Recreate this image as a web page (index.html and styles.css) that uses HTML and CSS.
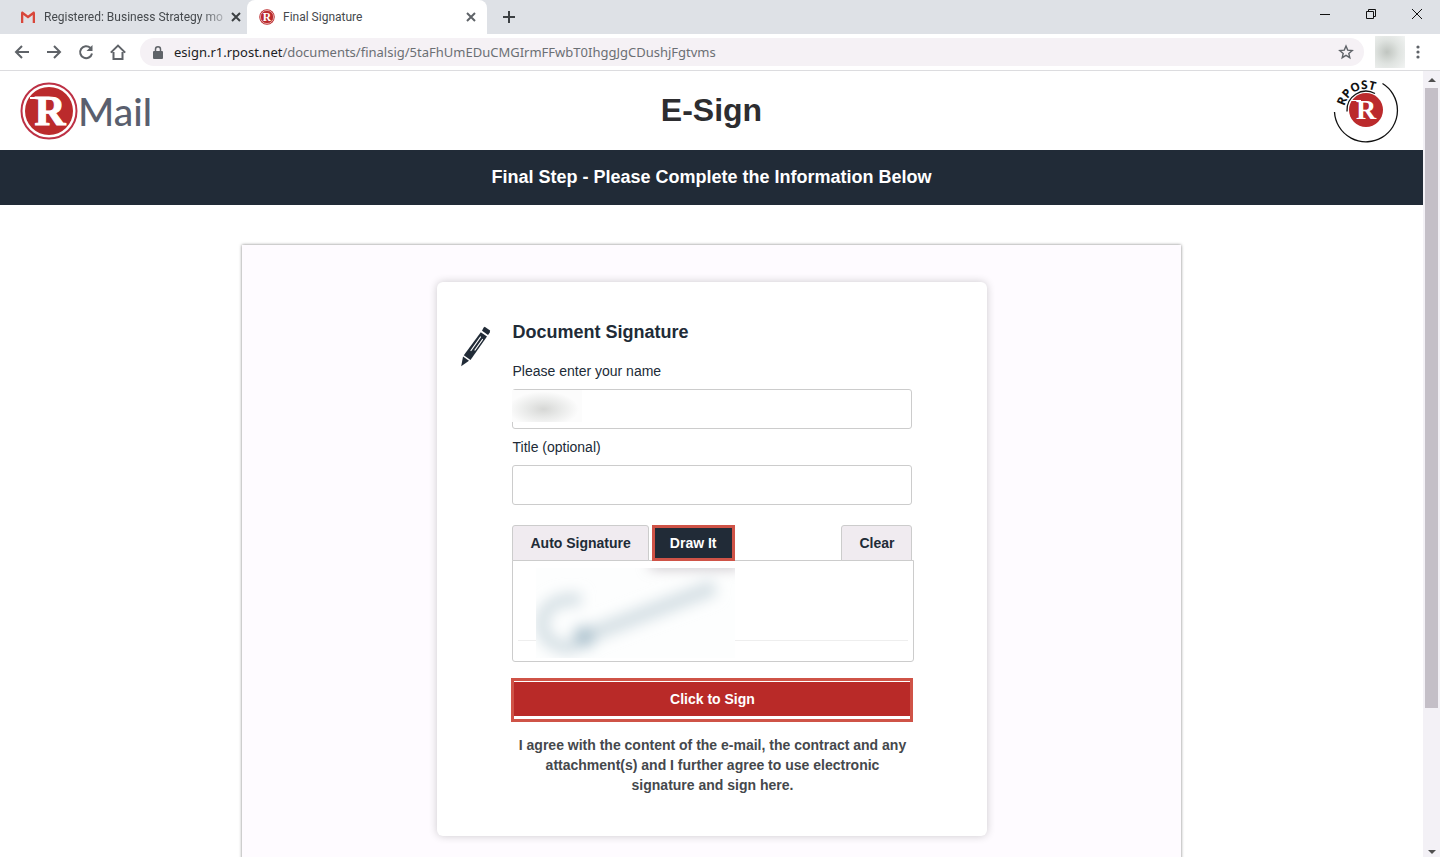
FILE: index.html
```html
<!DOCTYPE html>
<html lang="en">
<head>
    <meta charset="UTF-8">
    <meta name="viewport" content="width=device-width, initial-scale=1">
    <title>Final Signature</title>
    <link rel="stylesheet" href="styles.css">
</head>
<body>
    <!-- Browser tabs -->
    <div class="tab-strip">
        <div class="tab">
            <svg class="favicon" viewBox="0 0 16 16">
                <path d="M1 3v11h2.500V6.500L8 10l4.500-3.500V14H15V3" fill="#e9e4e4"/>
                <path d="M1 14V4.200C1 2.600 2.300 2.200 3.300 3L8 6.600 12.700 3c1-.8 2.300-.4 2.300 1.200V14h-2.300V6L8 9.600 3.300 6v8z" fill="#d8473b"/>
            </svg>
            <span class="tab-title fade">Registered: Business Strategy mo</span>
            <button class="icon-btn" aria-label="Close tab"><svg width="10" height="10" viewBox="0 0 10 10"><path d="M1 1l8 8M9 1L1 9" stroke="#3c4043" stroke-width="2"/></svg></button>
        </div>
        <div class="tab active">
            <svg class="favicon" viewBox="0 0 58 58">
                <circle cx="29" cy="29" r="28" fill="#bb2a2c"/>
                <circle cx="29" cy="29" r="24" fill="none" stroke="#fff" stroke-width="2"/>
                <text class="logo-r" x="29" y="43" font-size="42">R</text>
            </svg>
            <span class="tab-title">Final Signature</span>
            <button class="icon-btn" aria-label="Close tab"><svg width="10" height="10" viewBox="0 0 10 10"><path d="M1 1l8 8M9 1L1 9" stroke="#5f6368" stroke-width="2"/></svg></button>
        </div>
        <button class="icon-btn new-tab" aria-label="New tab"><svg width="12" height="12" viewBox="0 0 12 12"><path d="M6 0v12M0 6h12" stroke="#3c4043" stroke-width="2"/></svg></button>
        <div class="window-buttons">
            <button class="icon-btn" aria-label="Minimize"><svg width="12" height="12" viewBox="0 0 12 12"><path d="M1 6.500h10" stroke="#111"/></svg></button>
            <button class="icon-btn" aria-label="Restore"><svg width="12" height="12" viewBox="0 0 12 12" fill="none" stroke="#111"><path d="M1.500 3.500h7v7h-7zM3.500 3.500v-2h7v7h-2"/></svg></button>
            <button class="icon-btn" aria-label="Close"><svg width="12" height="12" viewBox="0 0 12 12"><path d="M1 1l10 10M11 1L1 11" stroke="#111"/></svg></button>
        </div>
    </div>

    <!-- Toolbar -->
    <div class="toolbar">
        <button class="icon-btn" aria-label="Back"><svg width="16" height="16" viewBox="0 0 16 16" class="stroke"><path d="M15 8H2M8 2L2 8l6 6"/></svg></button>
        <button class="icon-btn" aria-label="Forward"><svg width="16" height="16" viewBox="0 0 16 16" class="stroke"><path d="M1 8h13M8 2l6 6-6 6"/></svg></button>
        <button class="icon-btn" aria-label="Reload"><svg width="16" height="16" viewBox="0 0 16 16" class="stroke"><path d="M14 9.500A6 6 0 1 1 12.300 3.800L13.500 5"/><path d="M14.500 1v6h-6z" fill="#5f6368" stroke="none"/></svg></button>
        <button class="icon-btn" aria-label="Home"><svg width="16" height="16" viewBox="0 0 16 16" class="stroke"><path d="M3.500 8v7h9V8M.8 8.600L8 1.600l7.200 7"/></svg></button>
        <div class="address-bar">
            <svg width="10" height="13" viewBox="0 0 10 13"><rect x="0" y="5" width="10" height="8" rx="1" fill="#5f6368"/><path d="M2.500 5.500V3.300a2.500 2.500 0 0 1 5 0v2.200" fill="none" stroke="#5f6368" stroke-width="1.500"/></svg>
            <span class="url"><b>esign.r1.rpost.net</b>/documents/finalsig/5taFhUmEDuCMGIrmFFwbT0IhggJgCDushjFgtvms</span>
            <button class="icon-btn" aria-label="Bookmark"><svg width="16" height="16" viewBox="0 0 16 16"><path d="M8 2l1.700 4.100 4.500.4-3.400 2.900 1 4.300L8 11.400l-3.800 2.300 1-4.300L1.800 6.500l4.500-.4z" fill="none" stroke="#5f6368" stroke-width="1.400"/></svg></button>
        </div>
        <div class="avatar"></div>
        <button class="icon-btn" aria-label="Menu"><svg width="4" height="14" viewBox="0 0 4 14" fill="#5f6368"><circle cx="2" cy="2" r="1.600"/><circle cx="2" cy="7" r="1.600"/><circle cx="2" cy="12" r="1.600"/></svg></button>
    </div>

    <div class="viewport">
        <div class="page">
            <header class="header">
                <div class="brand">
                    <svg width="58" height="58" viewBox="0 0 58 58">
                        <circle cx="29" cy="29" r="27.500" fill="#fff" stroke="#bd3145" stroke-width="2"/>
                        <circle cx="29" cy="29" r="24" fill="#bb2a2c"/>
                        <text class="logo-r" x="30" y="43" font-size="43" stroke="#fff">R</text>
                        <path d="M10 15h10v2H10z" fill="#fff"/>
                    </svg>
                    <span>Mail</span>
                </div>
                <h1>E-Sign</h1>
                <svg class="rpost" width="66" height="66" viewBox="0 0 66 66">
                    <defs><path id="arc" d="M11.500 28.400A22 22 0 0 1 49 18"/></defs>
                    <path d="M49.500 5.500A31.500 31.500 0 1 1 1.500 34" fill="none" stroke="#111" stroke-width="1.300"/>
                    <path d="M14 33.500A19 19 0 0 1 42 15.500" fill="none" stroke="#111" stroke-width="1.300"/>
                    <circle cx="33" cy="32" r="17" fill="#bb2a2c"/>
                    <text class="logo-r" x="33" y="41" font-size="28">R</text>
                    <path d="M18 22h10v1H18z" fill="#fff"/>
                    <text class="rpost-text"><textPath href="#arc">RPOST</textPath></text>
                </svg>
            </header>
            <div class="banner">Final Step - Please Complete the Information Below</div>

            <main class="panel">
                <form class="card">
                    <svg class="pencil" width="32" height="42" viewBox="0 0 32 42">
                        <g fill="#212b37">
                            <path d="M23.500 1.800l1.200-1 5.400 3.800-.3 1.800-1.800 2.600-6-4.200z"/>
                            <path d="M20.800 6.200l6.200 4.400-16.500 23.400-6.700-4.700z"/>
                            <path d="M3 30.500l6 4.300-7.800 5.400z"/>
                        </g>
                        <path d="M20.500 11L11 24.500M22.500 13.500L15 24" stroke="#fff" stroke-width="1.200" stroke-linecap="round"/>
                    </svg>
                    <div class="fields">
                        <h2>Document Signature</h2>
                        <label for="name">Please enter your name</label>
                        <div class="name-field">
                            <input type="text" id="name">
                            <span class="redacted"></span>
                        </div>
                        <label for="job-title">Title (optional)</label>
                        <input type="text" id="job-title">
                        <div class="sig-tabs">
                            <button type="button">Auto Signature</button>
                            <button type="button" class="current">Draw It</button>
                            <button type="button" class="clear">Clear</button>
                        </div>
                        <div class="sig-pad">
                            <svg width="100%" height="100" viewBox="0 0 400 100">
                                <defs>
                                    <filter id="soft" x="-30%" y="-30%" width="160%" height="160%"><feGaussianBlur stdDeviation="7"/></filter>
                                    <clipPath id="area"><rect x="23" y="7" width="199" height="90"/></clipPath>
                                </defs>
                                <path d="M5 79.500h390" stroke="#eee"/>
                                <g clip-path="url(#area)">
                                    <rect x="22" y="7" width="200" height="90" fill="#fdfefe"/>
                                    <g filter="url(#soft)" fill="none">
                                        <path d="M137 2h90" stroke="#b8b0b8" stroke-width="9"/>
                                        <path d="M68 39C44 35 28 48 29 64s18 25 34 22" stroke="#d4dfe4" stroke-width="13"/>
                                        <path d="M70 76L202 26" stroke="#d6e0e5" stroke-width="16"/>
                                        <circle cx="71" cy="76" r="11" fill="#b0c5d0"/>
                                    </g>
                                </g>
                            </svg>
                        </div>
                        <div class="sign-outline"><button type="submit" class="sign-btn">Click to Sign</button></div>
                        <p>I agree with the content of the e-mail, the contract and any attachment(s) and I further agree to use electronic signature and sign here.</p>
                    </div>
                </form>
            </main>
        </div>
        <div class="scrollbar">
            <svg width="8" height="4" viewBox="0 0 8 4"><path d="M0 4l4-4 4 4z" fill="#505050"/></svg>
            <div class="track"><div class="thumb"></div></div>
            <svg width="8" height="4" viewBox="0 0 8 4"><path d="M0 0l4 4 4-4z" fill="#505050"/></svg>
        </div>
    </div>
</body>
</html>
```
FILE: styles.css
```css
* {
    box-sizing: border-box;
}

body {
    margin: 0;
    height: 100vh;
    display: flex;
    flex-direction: column;
    overflow: hidden;
    background: #fff;
    color: #212b37;
    font-family: "Liberation Sans", Arial, sans-serif;
    font-size: 14px;
}

svg {
    display: block;
    flex: none;
}

button {
    font-family: inherit;
    cursor: pointer;
}

.icon-btn {
    display: flex;
    flex: none;
    align-items: center;
    justify-content: center;
    padding: 0;
    border: none;
    background: none;
}

/* browser */
.tab-strip {
    display: flex;
    flex: none;
    height: 34px;
    background: #dee1e6;
    font-family: Roboto, "Open Sans", sans-serif;
    font-size: 12px;
    color: #45494d;
}

.tab {
    display: flex;
    align-items: center;
    gap: 8px;
    width: 240px;
    padding: 0 11px 0 12px;
}

.tab:first-child {
    width: 247px;
    padding: 0 10px 0 20px;
}

.tab.active {
    background: #fff;
    border-radius: 8px 8px 0 0;
}

.favicon {
    width: 16px;
    height: 16px;
}

.tab-title {
    flex: 1;
    white-space: nowrap;
}

.fade {
    mask-image: linear-gradient(to right, #000 88%, rgba(0, 0, 0, 0.3));
}

.new-tab {
    margin-left: 16px;
}

.window-buttons {
    display: flex;
    gap: 34px;
    margin: 0 17px 6px auto;
}

.toolbar {
    display: flex;
    flex: none;
    align-items: center;
    gap: 16px;
    height: 37px;
    padding: 0 20px 0 14px;
    border-bottom: 1px solid #dcdcdf;
}

.stroke {
    fill: none;
    stroke: #5f6368;
    stroke-width: 2;
}

.address-bar {
    display: flex;
    flex: 1;
    align-items: center;
    gap: 11px;
    height: 28px;
    margin-right: -5px;
    margin-left: -2px;
    padding: 0 10px 0 13px;
    border-radius: 14px;
    background: #f5f1f5;
}

.url {
    flex: 1;
    font-family: "Noto Sans", "Open Sans", sans-serif;
    font-size: 13px;
    color: #6b6f74;
}

.url b {
    font-weight: normal;
    color: #202124;
}

.avatar {
    width: 30px;
    height: 32px;
    margin-right: -5px;
    background: radial-gradient(circle at 40% 50%, #c0c5c0, #dfe3e0 50%, #f2f4f3);
}

/* page */
.viewport {
    display: flex;
    flex: 1;
    min-height: 0;
}

.page {
    flex: 1;
    overflow: hidden;
}

.header {
    display: grid;
    grid-template-columns: 1fr auto 1fr;
    align-items: center;
    height: 79px;
    padding: 0 20px;
}

.brand {
    display: flex;
    align-items: center;
    font-family: Lato, sans-serif;
    font-size: 39px;
    font-weight: 500;
    color: #5a5f6e;
}

.logo-r {
    fill: #fff;
    font-family: "Liberation Serif", serif;
    font-weight: bold;
    text-anchor: middle;
}

.rpost {
    justify-self: end;
    margin-right: 4px;
    overflow: visible;
}

.rpost-text {
    fill: #111;
    font-family: "Open Sans", sans-serif;
    font-size: 12px;
    font-weight: bold;
}

h1 {
    margin: 0;
    font-size: 32px;
    color: #2d2d30;
}

.banner {
    padding: 16px;
    background: #212b37;
    color: #fff;
    font-size: 18px;
    font-weight: bold;
    line-height: 23px;
    text-align: center;
}

.panel {
    width: 66%;
    min-height: 900px;
    margin: 40px auto 0;
    padding: 37px 19px 37px 21px;
    background: #fefbff;
    box-shadow: 0 0 3px rgba(0, 0, 0, 0.5);
}

.card {
    display: grid;
    grid-template-columns: 52px 1fr;
    max-width: 550px;
    margin: 0 auto;
    padding: 40px 75px 41px 23px;
    border-radius: 6px;
    background: #fff;
    box-shadow: 0 0 8px rgba(0, 0, 0, 0.2);
}

.pencil {
    margin-top: 4px;
}

h2 {
    margin: 0 0 19px;
    font-size: 18px;
    line-height: 20px;
}

label {
    display: block;
    margin: 8px 0;
    line-height: 20px;
}

input {
    display: block;
    width: 100%;
    height: 40px;
    padding: 0 12px;
    border: 1px solid #ccc;
    border-radius: 3px;
    background: #fff;
    font-size: 14px;
}

.name-field {
    position: relative;
}

.redacted {
    position: absolute;
    top: 1px;
    left: 0;
    width: 70px;
    height: 32px;
    background: radial-gradient(ellipse at 45% 60%, #d6d7d5, #e8e9e8 30%, #fcfcfc 65%);
}

.sig-tabs {
    display: flex;
    gap: 3px;
    margin-top: 20px;
}

.sig-tabs button {
    height: 36px;
    padding: 0 17px;
    border: 1px solid #ccc;
    border-radius: 3px 3px 0 0;
    background: #f0ebf0;
    color: #212b37;
    font-size: 14px;
    font-weight: bold;
}

.sig-tabs .current {
    padding: 0 15px;
    border: 3px solid #cf5347;
    border-radius: 0;
    background: #212b37;
    color: #fff;
}

.sig-tabs .clear {
    margin-left: auto;
}

.sig-pad {
    margin: -1px -2px 16px 0;
    border: 1px solid #ccc;
    border-radius: 0 0 3px 3px;
}

.sign-outline {
    margin: 0 -1px;
    padding: 1px 0 3px;
    border: 3px solid #cf5347;
}

.sign-btn {
    display: block;
    width: 100%;
    height: 34px;
    border: none;
    background: #b92a28;
    color: #fff;
    font-size: 14px;
    font-weight: bold;
}

p {
    margin: 13px 0 0;
    color: #45484c;
    font-weight: bold;
    line-height: 20px;
    text-align: center;
}

.scrollbar {
    display: flex;
    flex: none;
    flex-direction: column;
    align-items: center;
    width: 17px;
    padding: 7px 0 3px;
    background: #f3f1f6;
}

.track {
    flex: 1;
    width: 13px;
    margin: 6px 0;
}

.thumb {
    height: 82%;
    background: #c4bfc7;
}
```
